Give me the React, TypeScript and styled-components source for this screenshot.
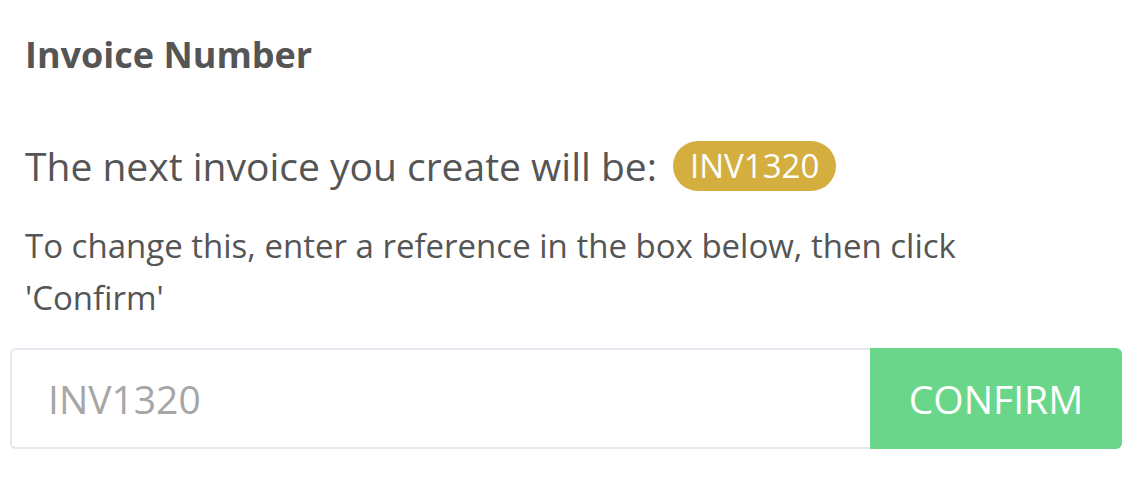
import styled, { createGlobalStyle } from "styled-components";

const GlobalStyle = createGlobalStyle`
  html, body {
    margin: 0;
    padding: 0;
    background: #ffffff;
  }
  body {
    font-family: "Open Sans", "Noto Sans", sans-serif;
    color: #555555;
  }
`;

const Panel = styled.section`
  width: 1131px;
  height: 483px;
  box-sizing: border-box;
  padding: 31px 9px 0 10px;
  display: flex;
  flex-direction: column;
`;

const Heading = styled.h2`
  margin: 0 0 0 15px;
  font-size: 36px;
  font-weight: 700;
  line-height: 48px;
  color: #555555;
`;

const NextLine = styled.p`
  margin: 62px 0 0 15px;
  display: flex;
  align-items: center;
  font-size: 39px;
  line-height: 50px;
  color: #555555;
`;

const Badge = styled.span`
  display: inline-flex;
  align-items: center;
  margin-left: 16px;
  padding: 0 17px;
  height: 50px;
  border-radius: 25px;
  background: #d4ae3e;
  color: #ffffff;
  font-size: 33px;
`;

const Hint = styled.p`
  margin: 29px 0 0 15px;
  font-size: 33px;
  line-height: 52px;
  color: #555555;
  max-width: 1000px;
`;

const Row = styled.div`
  margin-top: 24px;
  display: flex;
  height: 101px;
`;

const Field = styled.input`
  flex: 1;
  min-width: 0;
  box-sizing: border-box;
  border: 2px solid #e6e6ee;
  border-right: none;
  border-radius: 6px 0 0 6px;
  padding: 0 36px;
  font-family: "Open Sans", sans-serif;
  font-size: 39px;
  color: #555555;
  outline: none;
  &::placeholder {
    color: #a6a6a6;
  }
`;

const Button = styled.button`
  width: 252px;
  border: none;
  border-radius: 0 6px 6px 0;
  background: #6ad68a;
  color: #ffffff;
  font-family: "Open Sans", sans-serif;
  font-size: 39px;
  cursor: pointer;
`;

export default function App() {
  return (
    <>
      <GlobalStyle />
      <Panel>
        <Heading>Invoice Number</Heading>
        <NextLine>
          The next invoice you create will be:
          <Badge>INV1320</Badge>
        </NextLine>
        <Hint>
          To change this, enter a reference in the box below, then click
          'Confirm'
        </Hint>
        <Row>
          <Field placeholder="INV1320" />
          <Button>CONFIRM</Button>
        </Row>
      </Panel>
    </>
  );
}
